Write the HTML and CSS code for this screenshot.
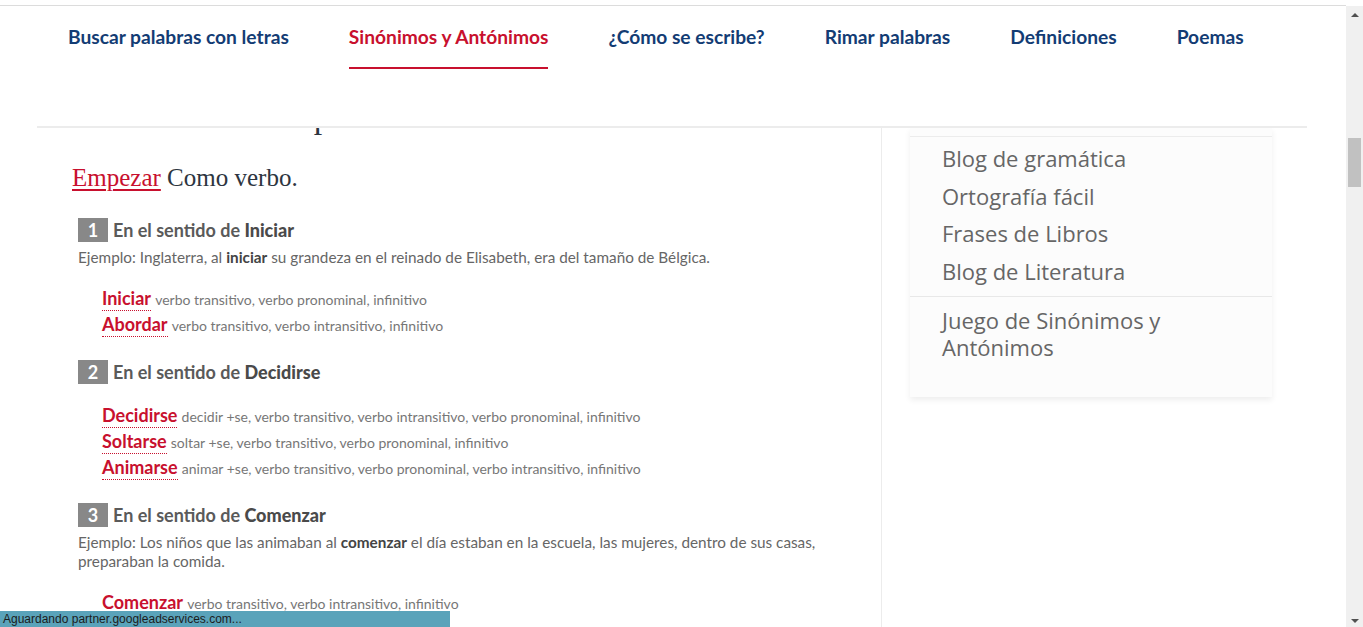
FILE: index.html
```html
<!DOCTYPE html>
<html lang="es">
<head>
  <meta charset="UTF-8">
  <meta name="viewport" content="width=device-width, initial-scale=1.0">
  <link rel="stylesheet" href="styles.css">
</head>
<body>
  <div class="window">
    <div class="page">
      <header class="site-header">
        <nav class="main-nav">
          <a href="#" class="nav-link">Buscar palabras con letras</a>
          <a href="#" class="nav-link active">Sinónimos y Antónimos</a>
          <a href="#" class="nav-link">¿Cómo se escribe?</a>
          <a href="#" class="nav-link">Rimar palabras</a>
          <a href="#" class="nav-link">Definiciones</a>
          <a href="#" class="nav-link">Poemas</a>
        </nav>
      </header>

      <div class="content">
        <main class="main-col">
          <h1 class="page-title">Sinónimos de Empezar</h1>

          <h2 class="word-type"><a href="#" class="word-link">Empezar</a> Como verbo.</h2>

          <section class="sense">
            <div class="sense-title"><span class="sense-num">1</span>En el sentido de <b>Iniciar</b></div>
            <p class="example">Ejemplo: Inglaterra, al <b>iniciar</b> su grandeza en el reinado de Elisabeth, era del tamaño de Bélgica.</p>
            <ul class="syn-list">
              <li><a href="#" class="syn">Iniciar</a> <span class="syn-info">verbo transitivo, verbo pronominal, infinitivo</span></li>
              <li><a href="#" class="syn">Abordar</a> <span class="syn-info">verbo transitivo, verbo intransitivo, infinitivo</span></li>
            </ul>
          </section>

          <section class="sense">
            <div class="sense-title"><span class="sense-num">2</span>En el sentido de <b>Decidirse</b></div>
            <ul class="syn-list">
              <li><a href="#" class="syn">Decidirse</a> <span class="syn-info">decidir +se, verbo transitivo, verbo intransitivo, verbo pronominal, infinitivo</span></li>
              <li><a href="#" class="syn">Soltarse</a> <span class="syn-info">soltar +se, verbo transitivo, verbo pronominal, infinitivo</span></li>
              <li><a href="#" class="syn">Animarse</a> <span class="syn-info">animar +se, verbo transitivo, verbo pronominal, verbo intransitivo, infinitivo</span></li>
            </ul>
          </section>

          <section class="sense">
            <div class="sense-title"><span class="sense-num">3</span>En el sentido de <b>Comenzar</b></div>
            <p class="example">Ejemplo: Los niños que las animaban al <b>comenzar</b> el día estaban en la escuela, las mujeres, dentro de sus casas, preparaban la comida.</p>
            <ul class="syn-list">
              <li><a href="#" class="syn">Comenzar</a> <span class="syn-info">verbo transitivo, verbo intransitivo, infinitivo</span></li>
            </ul>
          </section>
        </main>

        <aside class="sidebar">
          <div class="side-card">
            <div class="card-top"></div>
            <ul class="side-links">
              <li><a href="#">Blog de gramática</a></li>
              <li><a href="#">Ortografía fácil</a></li>
              <li><a href="#">Frases de Libros</a></li>
              <li><a href="#">Blog de Literatura</a></li>
            </ul>
            <div class="side-game"><a href="#">Juego de Sinónimos y Antónimos</a></div>
          </div>
        </aside>
      </div>
    </div>

    <div class="scrollbar">
      <span class="arrow-up"></span>
      <span class="thumb"></span>
      <span class="arrow-down"></span>
    </div>
  </div>

  <div class="status-bar">Aguardando partner.googleadservices.com...</div>
</body>
</html>
```

FILE: styles.css
```css
body {
  margin: 0;
  padding-top: 5px;
  height: 622px;
  overflow: hidden;
  background: #fff;
  font-family: Lato, "Noto Sans", sans-serif;
  color: #555;
}

a {
  text-decoration: none;
}

ul {
  list-style: none;
  margin: 0;
  padding: 0;
}

.window {
  display: flex;
  height: 622px;
}

.page {
  flex: 1;
  border-top: 1px solid #dcdcdc;
  overflow: hidden;
}

/* header (sticky, page is scrolled under it) */

.site-header {
  position: relative;
  z-index: 2;
  margin: 0 39px 0 37px;
  height: 120px;
  background: #fff;
  border-bottom: 2px solid #ececec;
}

.main-nav {
  display: flex;
  gap: 60px;
  padding-left: 31px;
}

.nav-link {
  padding: 20px 0 19px;
  line-height: 22px;
  font-size: 19.2px;
  font-weight: 700;
  color: #133c74;
  border-bottom: 2px solid transparent;
}

.nav-link.active {
  color: #c8102e;
  border-bottom-color: #c8102e;
}

/* content */

.content {
  display: flex;
  margin: -31px 39px 0 37px;
  height: 531px;
}

.main-col {
  width: 809px;
  padding-left: 35px;
  border-right: 1px solid #ececec;
}

.page-title {
  margin: 0;
  font-family: "Liberation Serif", serif;
  font-size: 34px;
  font-weight: 400;
  line-height: 40px;
  color: #2d3540;
}

.word-type {
  margin: 25px 0 0;
  font-family: "Liberation Serif", serif;
  font-size: 25px;
  font-weight: 400;
  line-height: 32px;
  color: #2d3540;
}

.word-link {
  color: #c8102e;
  text-decoration: underline;
  text-decoration-thickness: 2px;
  text-underline-offset: 3px;
}

.sense {
  margin: 21px 0 0 6px;
}

.word-type + .sense {
  margin-top: 24px;
}

.sense-title {
  height: 24px;
  line-height: 24px;
  font-size: 18px;
  font-weight: 700;
  color: #5a5a5a;
}

.sense-title b {
  color: #4a4a4a;
}

.sense-num {
  display: inline-block;
  vertical-align: top;
  width: 30px;
  height: 24px;
  margin-right: 5px;
  text-align: center;
  background: #888;
  color: #fff;
}

.example {
  margin: 6px 0 0;
  max-width: 750px;
  font-size: 15.3px;
  line-height: 19px;
  color: #666;
}

.example b {
  color: #444;
}

.syn-list {
  margin-top: 20px;
  padding-left: 24px;
}

.syn-list li {
  height: 26px;
  line-height: 24px;
}

.syn {
  display: inline-block;
  line-height: 20px;
  padding-bottom: 2px;
  font-size: 18px;
  font-weight: 700;
  color: #c8102e;
  border-bottom: 1px dotted #c8102e;
}

.syn-info {
  font-size: 14px;
  color: #777;
}

/* sidebar */

.sidebar {
  flex: 1;
  padding-top: 31px;
}

.side-card {
  width: 362px;
  margin-left: 28px;
  padding-bottom: 36px;
  background: #fcfcfc;
  box-shadow: 0 3px 6px rgba(0, 0, 0, 0.07);
  font-family: "Open Sans", sans-serif;
  font-size: 22px;
}

.side-card a {
  color: #666;
}

.card-top {
  height: 8px;
  border-bottom: 1px solid #ececec;
}

.side-links {
  padding: 3px 0 6px 32px;
  border-bottom: 1px solid #e8e8e8;
}

.side-links li {
  line-height: 37.5px;
}

.side-game {
  padding: 10px 90px 0 32px;
  line-height: 27px;
}

/* fake browser chrome */

.scrollbar {
  width: 17px;
  margin-top: 1px;
  background: #f0f0f0;
  display: flex;
  flex-direction: column;
  align-items: center;
}

.arrow-up,
.arrow-down {
  width: 0;
  height: 0;
  border-left: 4px solid transparent;
  border-right: 4px solid transparent;
}

.arrow-up {
  margin-top: 7px;
  border-bottom: 4px solid #505050;
}

.arrow-down {
  margin-top: auto;
  margin-bottom: 4px;
  border-top: 4px solid #505050;
}

.thumb {
  width: 13px;
  height: 49px;
  margin-top: 121px;
  background: #c1c1c1;
}

.status-bar {
  position: fixed;
  left: 0;
  bottom: 0;
  width: 447px;
  height: 16px;
  padding-left: 3px;
  background: #5aa3ba;
  font-family: "Liberation Sans", sans-serif;
  font-size: 12px;
  line-height: 17px;
  color: #1c1c1c;
}
```
